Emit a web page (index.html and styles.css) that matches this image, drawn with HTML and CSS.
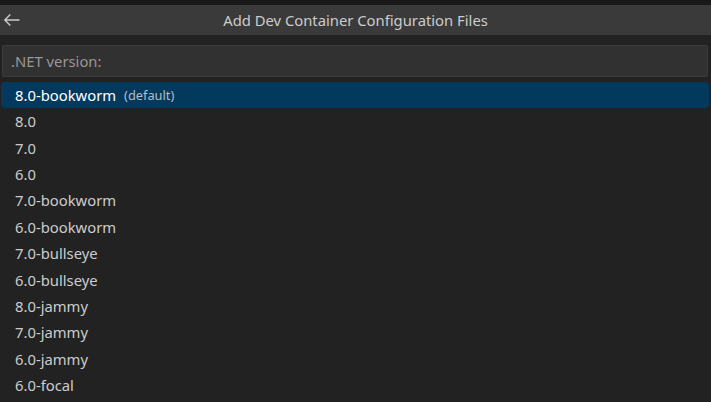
FILE: index.html
```html
<!DOCTYPE html>
<html>
<head>
<meta charset="utf-8">
<link rel="stylesheet" href="styles.css">
</head>
<body>
<div class="widget">
  <div class="title">
    <span class="back">
      <svg width="22" height="22" viewBox="0 0 22 22"><path d="M19.5 11H4.8M10.3 5.5L4.8 11l5.5 5.5" fill="none" stroke="#cccccc" stroke-width="1.4"/></svg>
    </span>
    <span class="title-text">Add Dev Container Configuration Files</span>
  </div>
  <div class="input-wrap">
    <div class="input">.NET version:</div>
  </div>
  <ul class="list">
    <li class="row selected"><span class="label">8.0-bookworm</span><span class="desc">(default)</span></li>
    <li class="row"><span class="label">8.0</span></li>
    <li class="row"><span class="label">7.0</span></li>
    <li class="row"><span class="label">6.0</span></li>
    <li class="row"><span class="label">7.0-bookworm</span></li>
    <li class="row"><span class="label">6.0-bookworm</span></li>
    <li class="row"><span class="label">7.0-bullseye</span></li>
    <li class="row"><span class="label">6.0-bullseye</span></li>
    <li class="row"><span class="label">8.0-jammy</span></li>
    <li class="row"><span class="label">7.0-jammy</span></li>
    <li class="row"><span class="label">6.0-jammy</span></li>
    <li class="row"><span class="label">6.0-focal</span></li>
  </ul>
</div>
</body>
</html>
```
FILE: styles.css
```css
html, body {
  margin: 0;
  padding: 0;
  background: #222222;
  width: 711px;
  height: 402px;
  overflow: hidden;
}
.widget {
  font-family: "Noto Sans", "Open Sans", sans-serif;
  font-size: 14.8px;
  color: #cccccc;
  border-top: 5px solid #181818;
}
.title {
  height: 30px;
  background: #3a3a3a;
  display: flex;
  align-items: center;
  justify-content: center;
  position: relative;
}
.back {
  position: absolute;
  left: 0;
  top: 4px;
  width: 22px;
  height: 22px;
  display: flex;
}
.title-text {
  color: #cccccc;
}
.input-wrap {
  padding: 10px 3px 5px 2px;
}
.input {
  height: 30px;
  background: #313131;
  border: 1px solid #3c3c3c;
  border-radius: 2px;
  color: #989898;
  padding-left: 8px;
  display: flex;
  align-items: center;
}
.list {
  list-style: none;
  margin: 0;
  padding: 0 2px 0 1px;
}
.row {
  height: 26.4px;
  display: flex;
  align-items: center;
  padding-left: 14px;
  border-radius: 4px;
}
.row.selected {
  background: #04395e;
  color: #ffffff;
  height: 26px;
}
.desc {
  margin-left: 8px;
  font-size: 12.8px;
  color: #b4bcc6;
}
```
